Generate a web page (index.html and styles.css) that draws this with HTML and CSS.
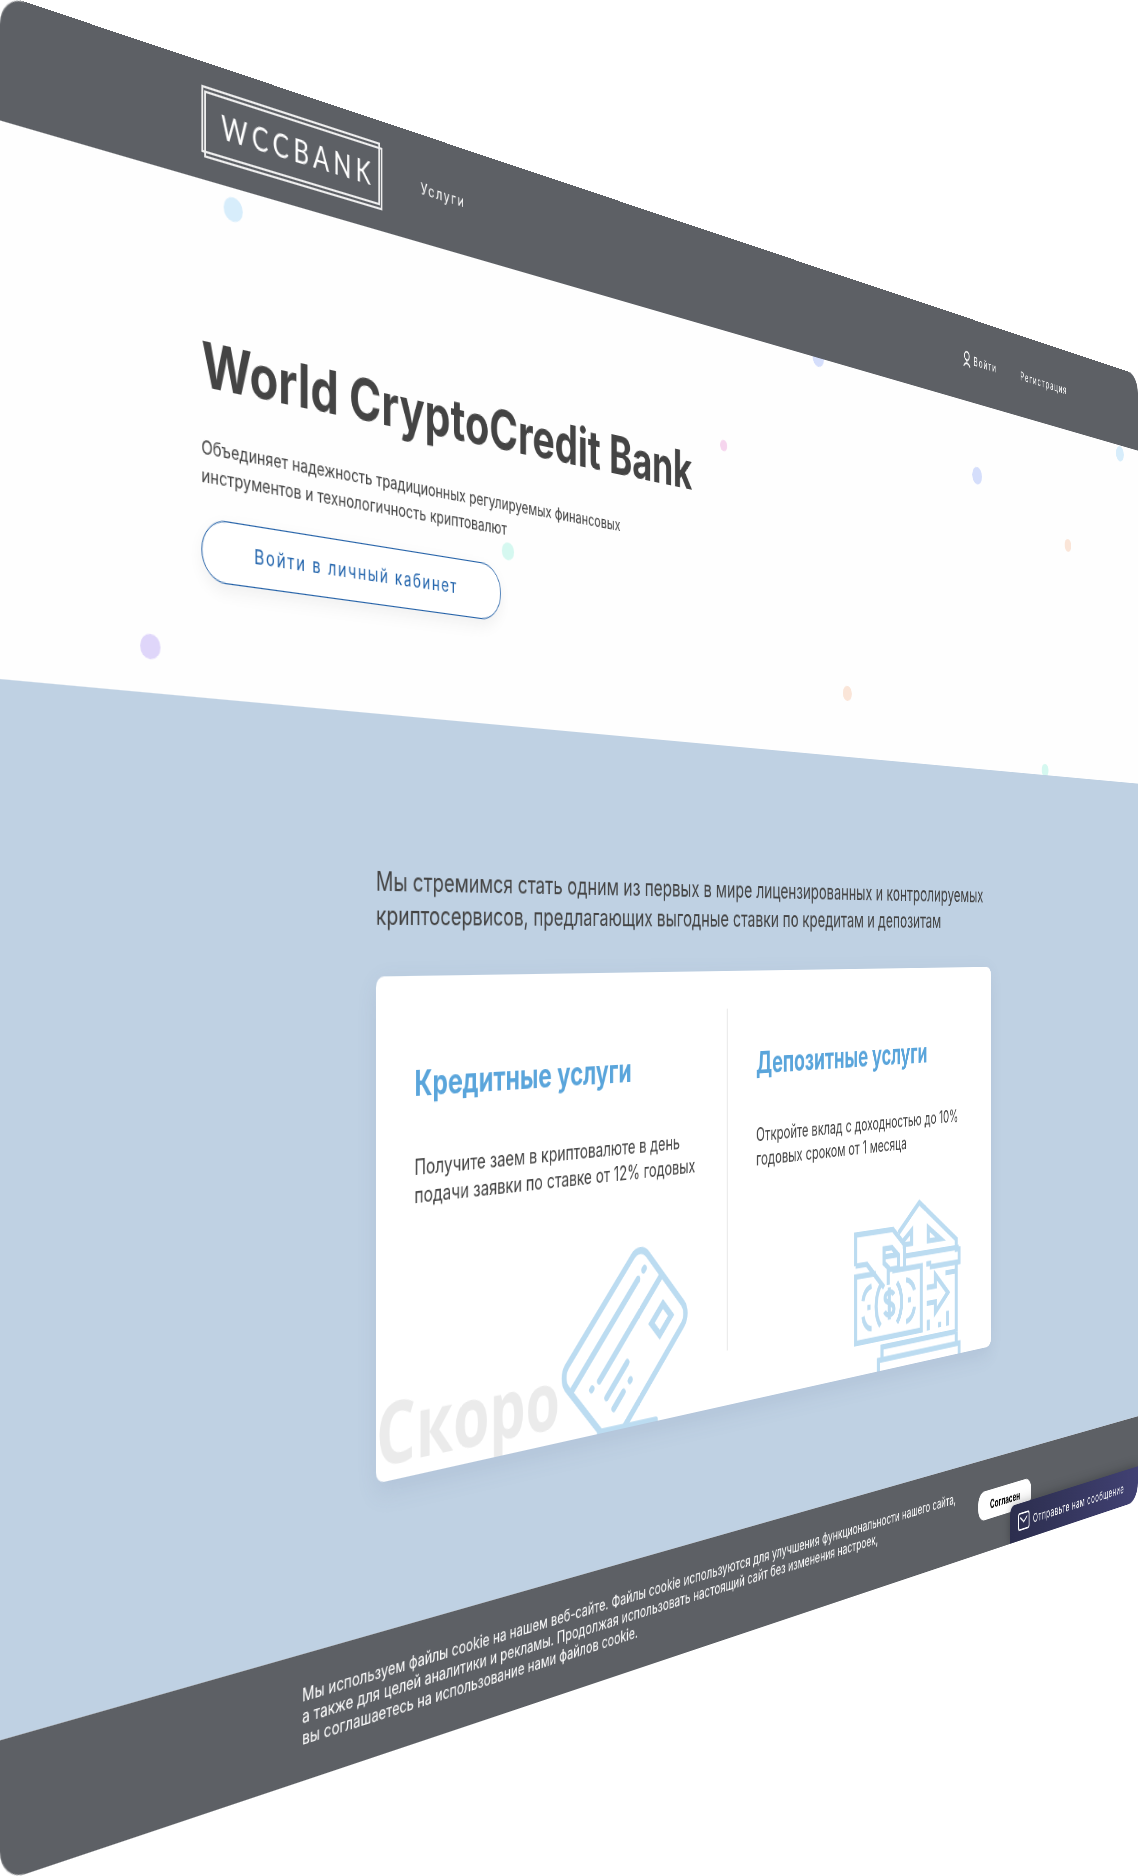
FILE: index.html
```html
<!DOCTYPE html>
<html lang="ru">
<head>
<meta charset="utf-8">
<title>World CryptoCredit Bank</title>
<link rel="stylesheet" href="styles.css">
</head>
<body>
<div class="scene">
  <div class="stage">
    <header class="header">
      <a class="logo" href="#"><span class="logo-text">WCCBANK</span></a>
      <nav class="nav"><a href="#services">Услуги</a></nav>
      <nav class="nav nav-account">
        <a class="with-icon" href="#login">
          <svg width="17" height="20" viewBox="0 0 17 20" fill="none" stroke="currentColor" stroke-width="2" aria-hidden="true"><circle cx="8.500" cy="6" r="5"/><path d="M8.500 11v4M2 19c1-3 3-4 6.500-4s5.500 1 6.500 4"/></svg>
          Войти</a>
        <a href="#register">Регистрация</a>
      </nav>
    </header>

    <section class="hero">
      <i class="dot sky" style="left:224px;top:8px;width:21px"></i>
      <i class="dot mint" style="left:563px;top:264px;width:17px"></i>
      <i class="dot violet" style="left:136px;top:391px;width:21px"></i>
      <i class="dot blue" style="left:1053px;top:-11px;width:21px"></i>
      <i class="dot pink" style="left:892px;top:116px;width:12px"></i>
      <i class="dot blue" style="left:1369px;top:76px;width:21px"></i>
      <i class="dot sky" style="left:1704px;top:1px;width:20px"></i>
      <i class="dot peach" style="left:1578px;top:138px;width:16px"></i>
      <i class="dot peach" style="left:1109px;top:360px;width:17px"></i>
      <i class="dot mint" style="left:1524px;top:426px;width:16px"></i>
      <h1>World CryptoCredit Bank</h1>
      <p>Объединяет надежность традиционных регулируемых финансовых<br>инструментов и технологичность криптовалют</p>
      <button class="cta" type="button">Войти в личный кабинет</button>
    </section>

    <main class="services" id="services">
      <p class="lead">Мы стремимся стать одним из первых в мире лицензированных и контролируемых<br>криптосервисов, предлагающих выгодные ставки по кредитам и депозитам</p>
      <div class="card">
        <article class="service">
          <h2>Кредитные услуги</h2>
          <p>Получите заем в криптовалюте в день<br>подачи заявки по ставке от 12% годовых</p>
          <span class="soon">Скоро</span>
          <svg class="picture" width="204" height="192" viewBox="628 1014 200 186" preserveAspectRatio="none" fill="none" stroke="#bcdcf1" stroke-width="7" stroke-linecap="round" aria-hidden="true">
            <g transform="translate(748.700 1021.600) rotate(45)">
              <rect x="0" y="0" width="108" height="167" rx="16"/>
              <path d="M22 13v2M22 27v138M47 2v131M44 145v1M67 95v43M83 104v1M83 119v20"/>
              <rect x="69" y="20" width="18" height="25" stroke-linecap="square"/>
            </g>
            <path d="M688 1199h84"/>
          </svg>
        </article>
        <article class="service">
          <h2>Депозитные услуги</h2>
          <p>Откройте вклад с доходностью до 10%<br>годовых сроком от 1 месяца</p>
          <svg class="picture" width="224" height="198" viewBox="1108 1008 220 192" preserveAspectRatio="none" fill="none" stroke="#bcdcf1" stroke-width="6" aria-hidden="true">
            <path d="M1197 1050l41-31 75 48v12h6v15h-60M1209 1077h109M1211 1065h-6"/>
            <path d="M1313 1094v80M1291 1104h21M1252 1090h10"/>
            <path d="M1204 1061l19-12v15h-15M1256 1049v15h25z"/>
            <path d="M1115 1079v-34h71l23 19v26M1115 1079h21l33 29M1177 1106v-17h20v-14l-13-10h-15v16l10 7M1172 1074h22"/>
            <path d="M1153 1091h-38v73h127v-73h-57"/>
            <path d="M1162 1105c-11 12-11 33 0 45M1194 1105c12 12 12 33 0 45"/>
            <path d="M1188 1118c-3-5-17-5-17 2s17 6 17 14-15 7-18 1M1179 1109v36"/>
            <path d="M1145 1104c-8 1-15 7-16 15M1145 1151c-8 0-15-7-16-15M1212 1104c8 1 15 7 16 13M1212 1151c8-1 15-7 16-15M1137 1127h6M1215 1127h6"/>
            <path d="M1253 1117h17v-13l26 23-26 20v-12h-17M1256 1154v12M1279 1159v6M1295 1148v17"/>
            <path d="M1313 1174h-148v14M1313 1174v12M1158 1202v-14h161v14"/>
          </svg>
        </article>
      </div>
    </main>

    <footer class="cookies">
      <p>Мы используем файлы cookie на нашем веб-сайте. Файлы cookie используются для улучшения функциональности нашего сайта,<br>а также для целей аналитики и рекламы. Продолжая использовать настоящий сайт без изменения настроек,<br>вы соглашаетесь на использование нами файлов cookie.</p>
      <button class="agree" type="button">Согласен</button>
      <button class="chat" type="button">
        <svg width="26" height="22" viewBox="0 0 26 22" fill="none" stroke="currentColor" stroke-width="2" aria-hidden="true"><rect x="1" y="1" width="24" height="20" rx="3"/><path d="M5 6l8 6 8-6"/></svg>
        Отправьте нам сообщение
      </button>
    </footer>
  </div>
</div>
</body>
</html>
```
FILE: styles.css
```css
* {
  box-sizing: border-box;
}

body {
  margin: 0;
  background: #fff;
  color: #444;
  font-family: Inter, "Liberation Sans", sans-serif;
  font-size: 16px;
  line-height: 24px;
}

h1, h2, p {
  margin: 0;
}

a {
  color: inherit;
  text-decoration: none;
}

button {
  font-family: inherit;
  cursor: pointer;
}

/* The whole site is shown as one tilted sheet */
.scene {
  min-height: 100vh;
  padding-top: 194px;
  overflow: hidden;
}

.stage {
  width: 1760px;
  border-radius: 24px;
  overflow: hidden;
  transform: scale(1.2695) perspective(1351px) rotateY(31.33deg);
  transform-origin: 0 50%;
}

/* Header */
.header {
  display: flex;
  align-items: center;
  height: 100px;
  padding: 0 176px 0 200px;
  background: #5d6065;
  color: #fff;
}

.logo {
  position: relative;
  display: flex;
  align-items: center;
  justify-content: center;
  width: 208px;
  height: 61px;
  padding-left: 12px;
}

.logo::before,
.logo::after {
  content: "";
  position: absolute;
  width: 201px;
  height: 53px;
  border: 2px solid #eee;
}

.logo::before {
  left: 0;
  top: 0;
}

.logo::after {
  right: 0;
  bottom: 0;
}

.logo-text {
  font-family: Lato, sans-serif;
  font-size: 28px;
  letter-spacing: 5px;
}

.nav {
  display: flex;
  gap: 52px;
  margin-left: 48px;
  font-size: 14px;
  letter-spacing: 2px;
}

.nav-account {
  margin-left: auto;
}

.with-icon {
  display: flex;
  align-items: center;
  gap: 6px;
}

/* Hero */
.hero {
  position: relative;
  height: 440px;
  padding: 125px 200px 0;
  background: #fefefe;
  overflow: hidden;
}

.hero h1 {
  font-size: 53px;
  line-height: 64px;
}

.hero p {
  margin-top: 26px;
}

.cta {
  width: 362px;
  height: 54px;
  margin-top: 24px;
  border: 1px solid #1f5ea6;
  border-radius: 27px;
  background: #fff;
  box-shadow: 0 6px 16px rgba(0, 0, 0, 0.06);
  color: #1f62ab;
  font-size: 17px;
  letter-spacing: 2px;
}

.dot {
  position: absolute;
  aspect-ratio: 1;
  border-radius: 50%;
}

.sky { background: #d7edfb; }
.mint { background: #d5f8f0; }
.violet { background: #dfd6fa; }
.blue { background: #d5defb; }
.pink { background: #f6d5ee; }
.peach { background: #fae5d8; }

/* Services */
.services {
  padding: 137px 350px 136px 400px;
  background: #bfd1e3;
}

.lead {
  font-size: 24px;
  line-height: 31px;
}

.card {
  display: grid;
  grid-template-columns: 1fr 1fr;
  height: 461px;
  margin-top: 40px;
  border-radius: 10px;
  background: #fff;
  box-shadow: 0 8px 24px rgba(80, 100, 140, 0.12);
}

.service {
  position: relative;
  padding: 80px 0 0 48px;
  overflow: hidden;
}

.service:first-child::after {
  content: "";
  position: absolute;
  top: 40px;
  right: 0;
  bottom: 58px;
  width: 2px;
  background: #ececec;
}

.service h2 {
  color: #5aa5db;
  font-size: 32px;
  line-height: 40px;
}

.service p {
  margin-top: 44px;
  font-size: 20px;
  line-height: 26px;
}

.soon {
  position: absolute;
  left: 0;
  bottom: 7px;
  color: #ebebeb;
  font: bold 78px/76px "Open Sans", sans-serif;
}

.picture {
  position: absolute;
  right: 60px;
  bottom: 0;
}

/* Cookie notice */
.cookies {
  position: relative;
  display: flex;
  align-items: center;
  gap: 24px;
  padding: 27px 0 28px 312px;
  background: #5d6065;
  color: #fff;
  line-height: 19px;
}

.cookies p {
  width: 1046px;
  white-space: nowrap;
}

.agree {
  width: 118px;
  height: 35px;
  border: 0;
  border-radius: 14px;
  background: #fff;
  color: #000;
  font-size: 14px;
  font-weight: bold;
}

.chat {
  position: absolute;
  right: 0;
  bottom: 0;
  display: flex;
  align-items: center;
  gap: 8px;
  width: 308px;
  height: 46px;
  padding: 0 18px;
  border: 0;
  border-radius: 10px 0 0 0;
  background: linear-gradient(90deg, #2c2e4e, #414173);
  box-shadow: 0 0 16px rgba(0, 0, 0, 0.3);
  color: #fff;
  font-size: 15px;
  letter-spacing: 1px;
  white-space: nowrap;
}
```
